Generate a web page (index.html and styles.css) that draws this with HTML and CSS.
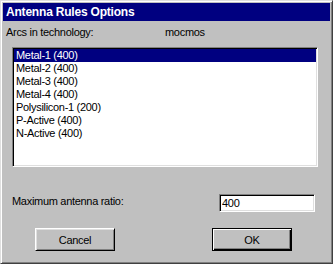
FILE: index.html
```html
<!DOCTYPE html>
<html lang="en">
<head>
    <meta charset="UTF-8">
    <title>Antenna Rules Options</title>
    <link rel="stylesheet" href="styles.css">
</head>
<body>
    <div class="dialog">
        <div class="title-bar">Antenna Rules Options</div>
        <div class="dialog-body">
            <div class="tech-row">
                <span class="tech-label">Arcs in technology:</span>
                <span class="tech-name">mocmos</span>
            </div>

            <ul class="arc-list">
                <li class="selected">Metal-1 (400)</li>
                <li>Metal-2 (400)</li>
                <li>Metal-3 (400)</li>
                <li>Metal-4 (400)</li>
                <li>Polysilicon-1 (200)</li>
                <li>P-Active (400)</li>
                <li>N-Active (400)</li>
            </ul>

            <div class="ratio-row">
                <label class="ratio-label" for="ratio-input">Maximum antenna ratio:</label>
                <input id="ratio-input" class="ratio-input" type="text" value="400">
            </div>

            <div class="button-row">
                <button class="btn">Cancel</button>
                <button class="btn btn-default">OK</button>
            </div>
        </div>
    </div>
</body>
</html>
```

FILE: styles.css
```css
body {
    margin: 0;
    font-family: 'Liberation Sans', Arial, sans-serif;
    font-size: 11px;
    color: #000;
    background: #c0c0c0;
}

.dialog {
    width: 333px;
    height: 264px;
    box-sizing: border-box;
    padding: 2px;
    background: #c0c0c0;
    border: 1px solid;
    border-color: #dfdfdf #404040 #404040 #dfdfdf;
    box-shadow: inset 1px 1px #fff, inset -1px -1px #808080;
}

.title-bar {
    height: 18px;
    padding-left: 3px;
    background: #000080;
    color: #fff;
    font-weight: bold;
    font-size: 12px;
    line-height: 19px;
    letter-spacing: -0.2px;
}

.dialog-body {
    letter-spacing: -0.3px;
}

.tech-row {
    display: flex;
    margin-top: 5px;
    padding-left: 3px;
    line-height: 13px;
}

.tech-label {
    width: 159px;
}

.arc-list {
    list-style: none;
    margin: 8px 0 0 9px;
    padding: 0;
    width: 306px;
    height: 120px;
    box-sizing: border-box;
    background: #fff;
    border: 1px solid;
    border-color: #808080 #fff #fff #808080;
    box-shadow: inset 1px 1px #000, inset -1px -1px #dfdfdf;
    padding: 1px;
}

.arc-list li {
    height: 13px;
    line-height: 13px;
    padding-left: 2px;
}

.arc-list li.selected {
    background: #000080;
    color: #fff;
}

.ratio-row {
    display: flex;
    align-items: flex-start;
    margin-top: 27px;
    padding-left: 9px;
}

.ratio-label {
    width: 207px;
    padding-top: 1px;
    line-height: 13px;
}

.ratio-input {
    width: 96px;
    height: 18px;
    box-sizing: border-box;
    margin: 0;
    padding: 0 0 0 1px;
    font-family: 'Liberation Sans', Arial, sans-serif;
    font-size: 11px;
    letter-spacing: -0.3px;
    line-height: 13px;
    color: #000;
    background: #fff;
    border: 1px solid;
    border-color: #808080 #fff #fff #808080;
    box-shadow: inset 1px 1px #000, inset -1px -1px #dfdfdf;
    padding-left: 2px;
    outline: none;
}

.button-row {
    display: flex;
    gap: 97px;
    margin-top: 16px;
    padding-left: 32px;
}

.btn {
    width: 80px;
    height: 23px;
    margin: 0;
    padding: 0;
    font-family: 'Liberation Sans', Arial, sans-serif;
    font-size: 11px;
    letter-spacing: -0.3px;
    color: #000;
    background: #c0c0c0;
    border: 1px solid;
    border-color: #fff #000 #000 #fff;
    box-shadow: inset 1px 1px #dfdfdf, inset -1px -1px #808080;
}

.btn-default {
    border-color: #000;
    box-shadow: inset 1px 1px #fff, inset -1px -1px #000, inset -2px -2px #808080;
}
```
